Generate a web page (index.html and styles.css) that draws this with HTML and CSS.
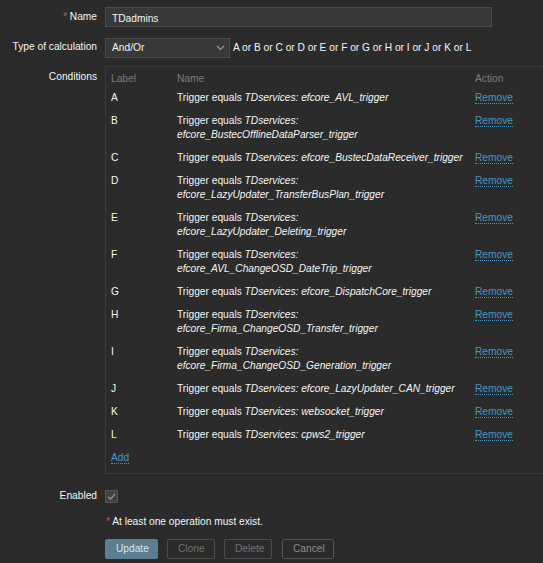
FILE: index.html
```html
<!DOCTYPE html>
<html>
<head>
<meta charset="utf-8">
<link rel="stylesheet" href="styles.css">
</head>
<body>
<div class="page">
  <div class="row row-name">
    <label class="lbl"><span class="req">*</span> Name</label>
    <div class="field"><div class="input">TDadmins</div></div>
  </div>
  <div class="row row-type">
    <label class="lbl">Type of calculation</label>
    <div class="field flexline">
      <div class="select">And/Or
        <svg class="chev" width="9" height="6" viewBox="0 0 9 6"><polyline points="1,1 4.5,4.5 8,1" fill="none" stroke="#9a9a9a" stroke-width="1.2"/></svg>
      </div>
      <span class="expr">A or B or C or D or E or F or G or H or I or J or K or L</span>
    </div>
  </div>
  <div class="row row-cond">
    <label class="lbl lbl-cond">Conditions</label>
    <div class="field">
      <div class="condbox">
        <table class="cond">
          <thead>
            <tr><th class="c-label">Label</th><th class="c-name">Name</th><th class="c-act">Action</th></tr>
          </thead>
          <tbody>
            <tr><td>A</td><td>Trigger equals <i>TDservices: efcore_AVL_trigger</i></td><td><a class="link">Remove</a></td></tr>
            <tr><td>B</td><td>Trigger equals <i>TDservices: efcore_BustecOfflineDataParser_trigger</i></td><td><a class="link">Remove</a></td></tr>
            <tr><td>C</td><td>Trigger equals <i>TDservices: efcore_BustecDataReceiver_trigger</i></td><td><a class="link">Remove</a></td></tr>
            <tr><td>D</td><td>Trigger equals <i>TDservices: efcore_LazyUpdater_TransferBusPlan_trigger</i></td><td><a class="link">Remove</a></td></tr>
            <tr><td>E</td><td>Trigger equals <i>TDservices: efcore_LazyUpdater_Deleting_trigger</i></td><td><a class="link">Remove</a></td></tr>
            <tr><td>F</td><td>Trigger equals <i>TDservices: efcore_AVL_ChangeOSD_DateTrip_trigger</i></td><td><a class="link">Remove</a></td></tr>
            <tr><td>G</td><td>Trigger equals <i>TDservices: efcore_DispatchCore_trigger</i></td><td><a class="link">Remove</a></td></tr>
            <tr><td>H</td><td>Trigger equals <i>TDservices: efcore_Firma_ChangeOSD_Transfer_trigger</i></td><td><a class="link">Remove</a></td></tr>
            <tr><td>I</td><td>Trigger equals <i>TDservices: efcore_Firma_ChangeOSD_Generation_trigger</i></td><td><a class="link">Remove</a></td></tr>
            <tr><td>J</td><td>Trigger equals <i>TDservices: efcore_LazyUpdater_CAN_trigger</i></td><td><a class="link">Remove</a></td></tr>
            <tr><td>K</td><td>Trigger equals <i>TDservices: websocket_trigger</i></td><td><a class="link">Remove</a></td></tr>
            <tr><td>L</td><td>Trigger equals <i>TDservices: cpws2_trigger</i></td><td><a class="link">Remove</a></td></tr>
            <tr><td colspan="3"><a class="link">Add</a></td></tr>
          </tbody>
        </table>
      </div>
    </div>
  </div>
  <div class="row row-enabled">
    <label class="lbl">Enabled</label>
    <div class="field flexline">
      <span class="checkbox">
        <svg width="13" height="13" viewBox="0 0 13 13"><polyline points="3,6.8 5.4,9.2 10,4" fill="none" stroke="#8d8d8d" stroke-width="1.4"/></svg>
      </span>
    </div>
  </div>
  <div class="row row-msg">
    <span></span>
    <div class="field msg"><span class="req">*</span> At least one operation must exist.</div>
  </div>
  <div class="row row-btns">
    <span></span>
    <div class="field buttons">
      <button class="btn btn-primary">Update</button>
      <button class="btn btn-alt">Clone</button>
      <button class="btn btn-alt">Delete</button>
      <button class="btn btn-alt btn-cancel">Cancel</button>
    </div>
  </div>
</div>
</body>
</html>
```
FILE: styles.css
```css
html, body {
  margin: 0;
  padding: 0;
  background: #2b2b2b;
}
body {
  font-family: "Liberation Sans", Arial, sans-serif;
  font-size: 10.2px;
  color: #f4f4f4;
  overflow: hidden;
}
.page {
  width: 543px;
  height: 563px;
  overflow: hidden;
}
.row {
  display: grid;
  grid-template-columns: 97px 1fr;
  column-gap: 8px;
}
.lbl {
  text-align: right;
  line-height: 20px;
  color: #f4f4f4;
}
.req {
  color: #e0474c;
}
.row-name { margin-top: 7px; }
.row-type { margin-top: 10px; }
.row-cond { margin-top: 8px; }
.row-enabled { margin-top: 12px; }
.row-msg { margin-top: 7px; }
.row-btns { margin-top: 8px; }

.input {
  box-sizing: border-box;
  width: 387px;
  height: 20px;
  line-height: 19px;
  padding: 1px 6px 0;
  background: #383838;
  border: 1px solid #4b4b4b;
}
.flexline {
  display: flex;
  align-items: center;
}
.select {
  box-sizing: border-box;
  width: 125px;
  height: 20px;
  line-height: 18px;
  padding: 1px 6px 0;
  background: #383838;
  border: 1px solid #4b4b4b;
  display: flex;
  align-items: center;
  justify-content: space-between;
}
.chev {
  margin-right: -2px;
}
.expr {
  margin-left: 3px;
  line-height: 20px;
  padding-top: 1px;
}
.lbl-cond {
  line-height: 14px;
  padding-top: 4px;
}
.condbox {
  border: 1px solid #3a3a3a;
  margin-right: -20px;
  padding: 0 0 3px 5px;
}
.cond {
  border-collapse: collapse;
  line-height: 14px;
}
.cond th {
  font-weight: normal;
  color: #7b7b7b;
  text-align: left;
  padding: 5px 0 1px 0;
}
.cond td {
  padding: 4px 0 5px 0;
  vertical-align: top;
}
.c-label { width: 66px; }
.c-name { width: 290px; padding-right: 8px !important; }
.cond td:nth-child(2) { padding-right: 8px; }
.link {
  color: #4796c4;
  border-bottom: 1px dotted #4796c4;
  text-decoration: none;
}
.checkbox {
  box-sizing: border-box;
  width: 13px;
  height: 13px;
  background: #424242;
  border: 1px solid #555555;
  display: flex;
  align-items: center;
  justify-content: center;
}
.checkbox svg {
  margin: -1px;
}
.row-enabled .field {
  height: 20px;
}
.msg {
  line-height: 18px;
}
.msg .req {
  margin-left: 1px;
}
.buttons {
  display: flex;
  gap: 9px;
}
.btn {
  box-sizing: border-box;
  height: 20px;
  font-family: "Liberation Sans", Arial, sans-serif;
  font-size: 10.2px;
  border-radius: 2px;
  padding: 0 10px;
  margin: 0;
  line-height: 18px;
}
.btn-primary {
  background: #5d7d90;
  border: 1px solid #5d7d90;
  color: #dfe5ea;
  width: 53px;
}
.btn-alt {
  background: transparent;
  border: 1px solid #4c4c4c;
  color: #707070;
  width: 48px;
}
.btn-cancel {
  width: 52px;
  margin-left: 1px;
  color: #8c8c8c;
  border-color: #555555;
}
```
